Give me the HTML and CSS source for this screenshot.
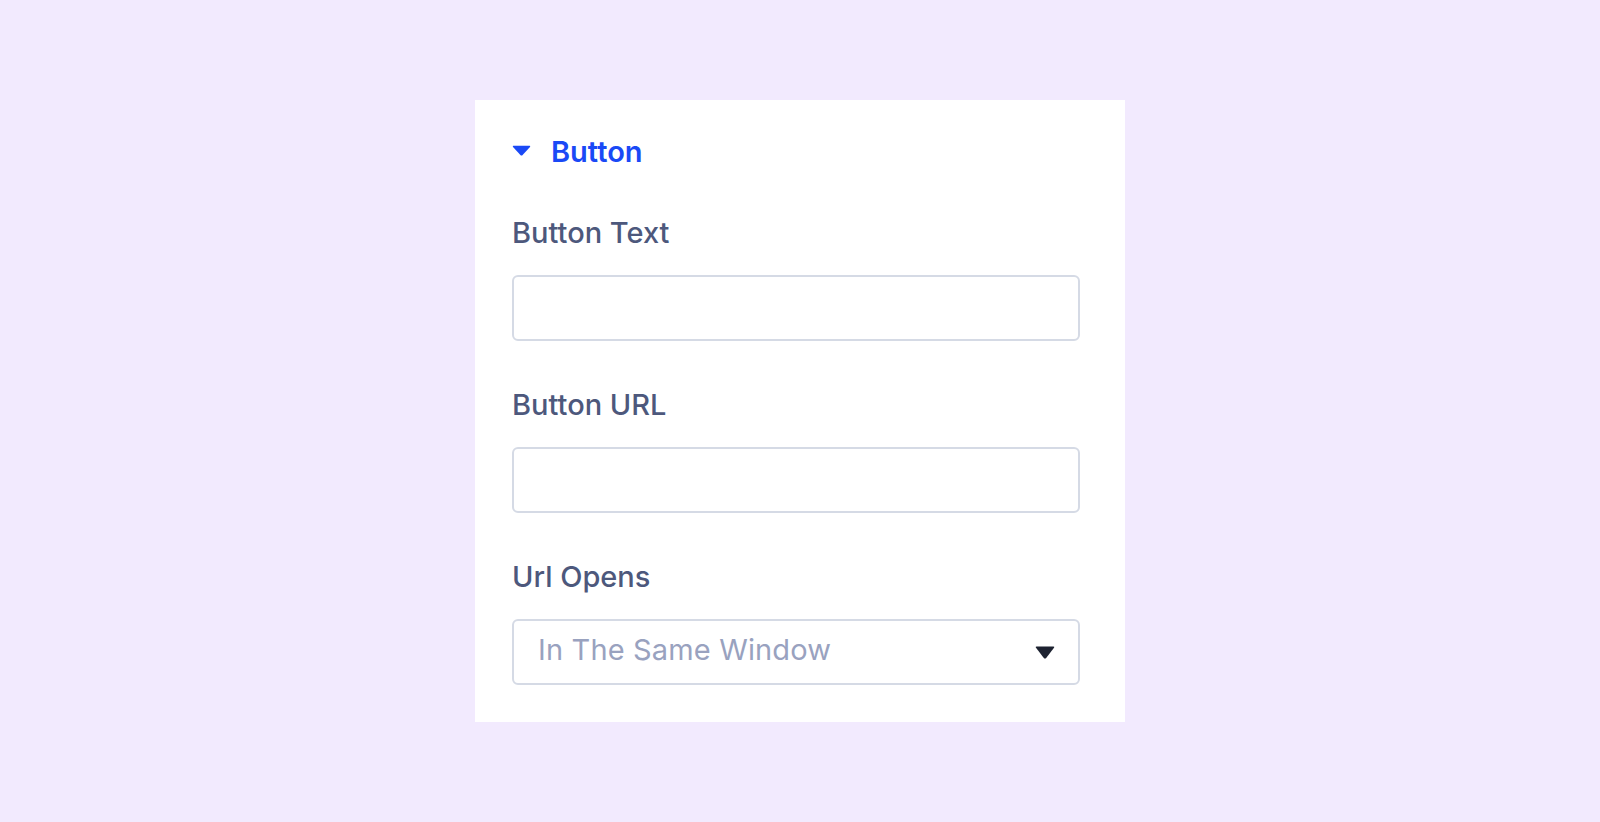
FILE: index.html
```html
<!DOCTYPE html>
<html lang="en">
<head>
<meta charset="utf-8">
<title>Button settings</title>
<link rel="stylesheet" href="styles.css">
</head>
<body>
<div class="stage">
  <section class="panel">
    <div class="panel-head">
      <svg class="caret" width="19" height="11" viewBox="0 0 19 11"><path d="M1.5 0.8 H17.5 Q18.8 0.8 18 2 L10.6 10 Q9.5 11 8.4 10 L1 2 Q0.2 0.8 1.5 0.8 Z" fill="#1a49f6"/></svg>
      <span class="panel-title">Button</span>
    </div>
    <div class="field">
      <label class="field-label">Button Text</label>
      <div class="input"></div>
    </div>
    <div class="field">
      <label class="field-label">Button URL</label>
      <div class="input"></div>
    </div>
    <div class="field">
      <label class="field-label">Url Opens</label>
      <div class="input select">
        <span class="select-value">In The Same Window</span>
        <svg class="select-arrow" width="20" height="13" viewBox="0 0 20 13"><path d="M1.6 0.5 H18.4 Q19.8 0.5 19 1.8 L11.2 12 Q10 13.2 8.8 12 L1 1.8 Q0.2 0.5 1.6 0.5 Z" fill="#1d2230"/></svg>
      </div>
    </div>
  </section>
</div>
</body>
</html>
```

FILE: styles.css
```css
html, body {
  margin: 0;
  padding: 0;
}
body {
  background: #f2eafe;
  font-family: Inter, "Noto Sans", sans-serif;
}
.stage {
  min-height: 100vh;
  display: flex;
  align-items: center;
  justify-content: center;
}
.panel {
  width: 650px;
  box-sizing: border-box;
  background: #ffffff;
  padding: 35px 45px 37px 37px;
  display: flex;
  flex-direction: column;
  gap: 47px;
}
.panel-head {
  display: flex;
  align-items: center;
  gap: 20px;
  height: 34px;
}
.caret {
  display: block;
  margin-top: -4px;
}
.panel-title {
  font-size: 29px;
  line-height: 34px;
  font-weight: 600;
  color: #1a49f6;
}
.field {
  display: flex;
  flex-direction: column;
  gap: 25px;
}
.field-label {
  font-size: 29px;
  line-height: 34px;
  font-weight: 500;
  color: #4d587c;
}
.input {
  height: 66px;
  box-sizing: border-box;
  border: 2px solid #d5dae5;
  border-radius: 6px;
  background: #fff;
}
.select {
  display: flex;
  align-items: center;
  justify-content: space-between;
  padding: 0 23px 4px 24px;
}
.select-value {
  font-size: 29px;
  line-height: 34px;
  letter-spacing: 0.15px;
  color: #99a2bf;
}
.select-arrow {
  display: block;
  margin-top: 4px;
}
```
